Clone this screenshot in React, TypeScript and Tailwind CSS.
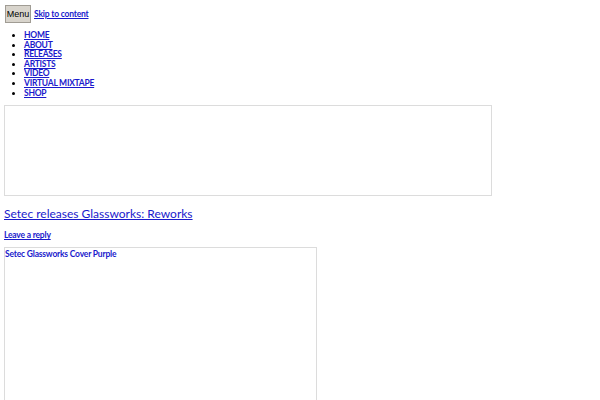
import React from "react";

const link = "text-[#1a1acc] underline";

export default function App() {
  const items = ["HOME", "ABOUT", "RELEASES", "ARTISTS", "VIDEO", "VIRTUAL MIXTAPE", "SHOP"];
  return (
    <div className="bg-white w-[600px] h-[400px] overflow-hidden px-1 pt-[5px]" style={{ fontFamily: "Lato, sans-serif" }}>
      <div className="flex items-center gap-[3px]">
        <button className="ml-px w-[26px] flex items-center justify-center bg-[#d8d4cc] border border-[#a09c94] h-[18px] text-[9px] font-normal text-black leading-none" style={{ fontFamily: "'Liberation Sans', sans-serif" }}>
          Menu
        </button>
        <a href="#" className={`${link} text-[8.5px] tracking-[-0.2px] font-bold`}>Skip to content</a>
      </div>
      <ul className="list-disc pl-5 mt-[8px] text-[8.5px] tracking-[-0.25px] font-bold leading-[9.6px]">
        {items.map((t) => (
          <li key={t}><a href="#" className={link}>{t}</a></li>
        ))}
      </ul>
      <div className="mt-[7px] w-[488px] h-[91px] border border-[#dcdcdc]" />
      <h1 className="mt-[10px] text-[12px] leading-[16px]">
        <a href="#" className={link}>Setec releases Glassworks: Reworks</a>
      </h1>
      <div className="mt-[8px] text-[8.5px] tracking-[-0.2px] font-bold leading-[10px]">
        <a href="#" className={link}>Leave a reply</a>
      </div>
      <div className="mt-[7px] w-[313px] h-[200px] border border-[#dcdcdc] text-[8.5px] tracking-[-0.2px] font-bold text-[#1a1acc] leading-[10px] pt-px">
        Setec Glassworks Cover Purple
      </div>
    </div>
  );
}
